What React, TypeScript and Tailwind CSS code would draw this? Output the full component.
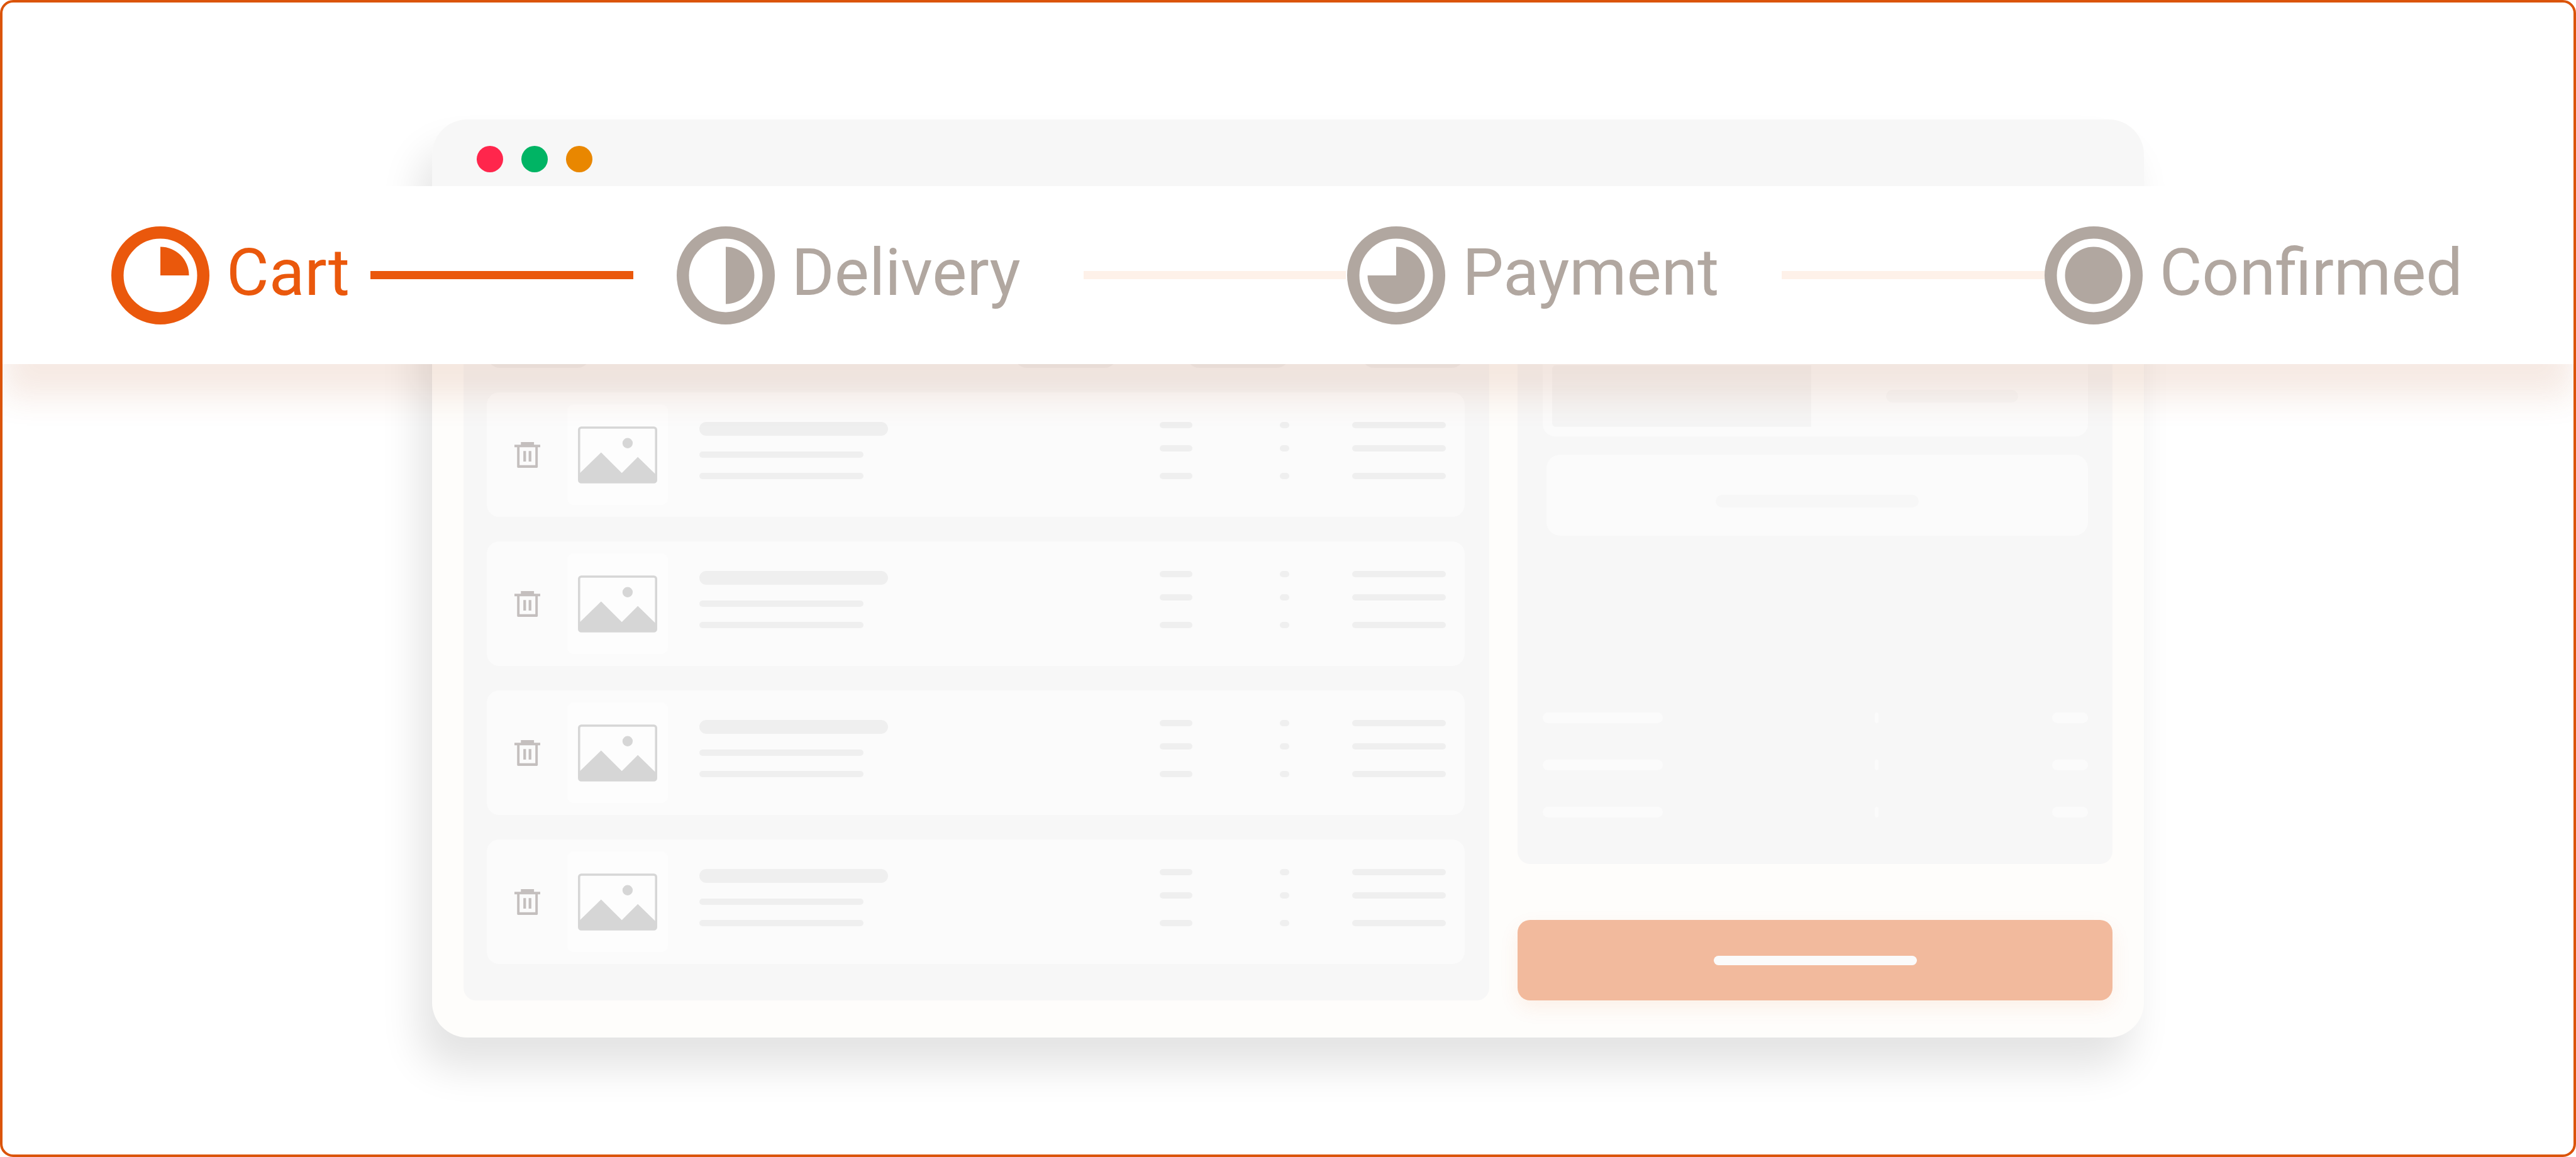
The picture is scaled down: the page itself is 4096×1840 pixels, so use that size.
type StepState = "quarter" | "half" | "threeQuarters" | "full";

const PIE_PATHS: Record<StepState, string> = {
  quarter: "M78 78V32.5A45.5 45.5 0 0 1 123.5 78Z",
  half: "M78 32.5A45.5 45.5 0 0 1 78 123.5Z",
  threeQuarters: "M78 78V32.5A45.5 45.5 0 1 1 32.5 78Z",
  full: "M78 32.5A45.5 45.5 0 1 1 78 123.5A45.5 45.5 0 1 1 78 32.5Z",
};

function ProgressIcon({ state }: { state: StepState }) {
  return (
    <svg viewBox="0 0 156 156" className="size-[156px] shrink-0" aria-hidden="true">
      <circle cx="78" cy="78" r="68.25" fill="none" stroke="currentColor" strokeWidth="19.5" />
      <path d={PIE_PATHS[state]} fill="currentColor" />
    </svg>
  );
}

function Step({ state, label, active = false }: { state: StepState; label: string; active?: boolean }) {
  return (
    <li
      aria-current={active ? "step" : undefined}
      className={`flex shrink-0 items-center gap-[27px] ${active ? "text-[#ea580c]" : "text-[#b1a7a0]"}`}
    >
      <ProgressIcon state={state} />
      <span className="pb-2 text-[104px] leading-none">{label}</span>
    </li>
  );
}

function Stepper() {
  return (
    <nav
      aria-label="Checkout progress"
      className="absolute inset-x-0 top-[292px] bg-white shadow-[0_54px_48px_-2px_rgba(180,80,30,0.12)]"
    >
      <ol className="flex h-[283px] items-center pr-[176px] pl-[173px]">
        <Step state="quarter" label="Cart" active />
        <li aria-hidden="true" className="mr-[69px] ml-[33px] h-[13px] flex-1 bg-[#ea580c]" />
        <Step state="half" label="Delivery" />
        <li aria-hidden="true" className="mr-0.5 ml-[100px] h-[13px] flex-1 bg-[#fef1e9]" />
        <Step state="threeQuarters" label="Payment" />
        <li aria-hidden="true" className="ml-[100px] h-[13px] flex-1 bg-[#fef1e9]" />
        <Step state="full" label="Confirmed" />
      </ol>
    </nav>
  );
}

function TrashIcon() {
  return (
    <svg viewBox="0 0 58 58" className="size-[41px]" aria-hidden="true" fill="#c4bfbe">
      <path d="M14.5 0H44V6H58V11.5H52.5V56Q52.5 58 50.5 58H8Q6 58 6 56V11.5H0V6H14.5ZM11.5 11.5V52H47V11.5Z" fillRule="evenodd" />
      <path d="M20 20H26V44H20ZM32 20H38V44H32Z" />
    </svg>
  );
}

function PictureIcon() {
  return (
    <svg viewBox="0 0 178 128" className="h-[91px] w-[126px]" aria-hidden="true" fill="#d6d6d6">
      <rect x="2.5" y="2.5" width="173" height="123" rx="5" fill="none" stroke="#d6d6d6" strokeWidth="5" />
      <circle cx="111.5" cy="37.5" r="11.5" />
      <path d="M3 106L52 58.5L98.5 104.5L134.5 68.5L175 108V122Q175 126 171 126H7Q3 126 3 122Z" />
    </svg>
  );
}

function BarColumn({ width }: { width: string }) {
  return (
    <div className={`${width} shrink-0`}>
      <div className="h-2.5 rounded-full bg-[#efefef]" />
      <div className="mt-[27px] h-2.5 rounded-full bg-[#efefef]" />
      <div className="mt-[34px] h-2.5 rounded-full bg-[#efefef]" />
    </div>
  );
}

function CartItem() {
  return (
    <li className="flex h-[198px] rounded-[20px] bg-[#fbfbfb] pr-[30px] pl-11">
      <button type="button" aria-label="Remove item" className="mr-[43px] self-center">
        <TrashIcon />
      </button>
      <div className="flex size-[160px] items-center justify-center self-center rounded-[10px] bg-[#fdfdfd]">
        <PictureIcon />
      </div>
      <div className="flex flex-1 pt-[47px] pl-[50px]">
        <div className="mr-auto w-[300px]">
          <div className="h-[22px] rounded-full bg-[#efefef]" />
          <div className="mt-[25px] h-2.5 w-[261px] rounded-full bg-[#efefef]" />
          <div className="mt-6 h-2.5 w-[261px] rounded-full bg-[#efefef]" />
        </div>
        <BarColumn width="w-[52px] mr-[139px]" />
        <BarColumn width="w-[15px] mr-[100px]" />
        <BarColumn width="w-[149px]" />
      </div>
    </li>
  );
}

function CartPanel() {
  return (
    <section aria-label="Cart items" className="rounded-[20px] bg-[#f7f7f7] pt-[183px] pr-[39px] pb-[58px] pl-[37px]">
      <div className="mb-[39px] flex">
        <div className="mr-auto h-[42px] w-[165px] rounded-full bg-[#f0f0f0]" />
        <div className="mr-[109px] h-[42px] w-[165px] rounded-full bg-[#f0f0f0]" />
        <div className="mr-[113px] h-[42px] w-[165px] rounded-full bg-[#f0f0f0]" />
        <div className="h-[42px] w-[165px] rounded-full bg-[#f0f0f0]" />
      </div>
      <ul className="flex flex-col gap-[39px]">
        {[1, 2, 3, 4].map((id) => (
          <CartItem key={id} />
        ))}
      </ul>
    </section>
  );
}

function SummaryRow() {
  return (
    <div className="flex">
      <div className="h-[17px] w-[191px] rounded-full bg-[#fbfbfb]" />
      <div className="ml-[337px] h-[17px] w-1.5 rounded-full bg-[#fbfbfb]" />
      <div className="ml-auto h-[17px] w-[57px] rounded-full bg-[#fbfbfb]" />
    </div>
  );
}

function SummaryPanel() {
  return (
    <div className="flex flex-col">
      <section
        aria-label="Order summary"
        className="flex flex-1 flex-col rounded-[20px] bg-[#f7f7f7] pt-10 pr-[39px] pb-[74px] pl-10"
      >
        <div className="flex rounded-[20px] bg-[#fbfbfb] pt-[181px] pb-[15px] pl-[15px]">
          <div className="h-[98px] w-[412px] rounded-l-[6px] bg-[#f5f5f5]" />
          <div className="flex flex-1 items-center justify-center pl-2">
            <div className="h-5 w-[210px] rounded-full bg-[#f7f7f7]" />
          </div>
        </div>
        <div className="mt-[29px] ml-1.5 flex h-[129px] justify-center rounded-[22px] bg-[#fbfbfb] pt-16">
          <div className="h-5 w-[323px] rounded-full bg-[#f7f7f7]" />
        </div>
        <div className="mt-auto flex flex-col gap-[58px]">
          <SummaryRow />
          <SummaryRow />
          <SummaryRow />
        </div>
      </section>
      <button
        type="button"
        aria-label="Continue"
        className="mt-[89px] flex h-32 items-center justify-center rounded-[20px] bg-[#f2ba9d] shadow-[0_12px_32px_rgba(234,88,12,0.08)]"
      >
        <span className="h-[15px] w-[323px] rounded-full bg-[#fbfbfb]" />
      </button>
    </div>
  );
}

function BrowserWindow() {
  return (
    <div className="w-[66.6%] overflow-clip rounded-[56px] bg-[#fefdfb] shadow-[-20px_48px_64px_rgba(0,0,0,0.11)]">
      <div className="flex h-[130px] gap-[29px] bg-[#f7f7f7] pt-[42px] pl-[71px]">
        <span className="size-[42px] rounded-full bg-[#ff264c]" />
        <span className="size-[42px] rounded-full bg-[#00b464]" />
        <span className="size-[42px] rounded-full bg-[#e98700]" />
      </div>
      <div className="grid grid-cols-[1631fr_946fr] gap-[45px] px-[50px] pt-10 pb-[59px]">
        <CartPanel />
        <SummaryPanel />
      </div>
    </div>
  );
}

export default function App() {
  return (
    <main className="relative flex min-h-screen items-center justify-center overflow-hidden rounded-[21px] border-4 border-[#db540a] bg-white font-['Roboto',sans-serif]">
      <BrowserWindow />
      <Stepper />
    </main>
  );
}
